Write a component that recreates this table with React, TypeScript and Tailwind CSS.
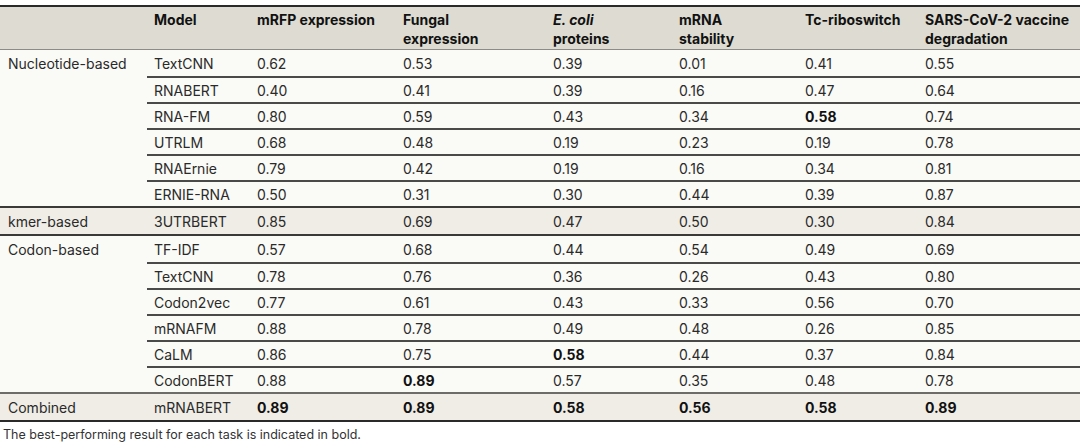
import React from "react";

type Row = { model: string; vals: string[]; bold?: number[] };
type Group = { name: string; rows: Row[]; shaded?: boolean; topGray?: boolean };

const groups: Group[] = [
  {
    name: "Nucleotide-based",
    rows: [
      { model: "TextCNN", vals: ["0.62", "0.53", "0.39", "0.01", "0.41", "0.55"] },
      { model: "RNABERT", vals: ["0.40", "0.41", "0.39", "0.16", "0.47", "0.64"] },
      { model: "RNA-FM", vals: ["0.80", "0.59", "0.43", "0.34", "0.58", "0.74"], bold: [4] },
      { model: "UTRLM", vals: ["0.68", "0.48", "0.19", "0.23", "0.19", "0.78"] },
      { model: "RNAErnie", vals: ["0.79", "0.42", "0.19", "0.16", "0.34", "0.81"] },
      { model: "ERNIE-RNA", vals: ["0.50", "0.31", "0.30", "0.44", "0.39", "0.87"] },
    ],
  },
  {
    name: "kmer-based",
    shaded: true,
    rows: [{ model: "3UTRBERT", vals: ["0.85", "0.69", "0.47", "0.50", "0.30", "0.84"] }],
  },
  {
    name: "Codon-based",
    rows: [
      { model: "TF-IDF", vals: ["0.57", "0.68", "0.44", "0.54", "0.49", "0.69"] },
      { model: "TextCNN", vals: ["0.78", "0.76", "0.36", "0.26", "0.43", "0.80"] },
      { model: "Codon2vec", vals: ["0.77", "0.61", "0.43", "0.33", "0.56", "0.70"] },
      { model: "mRNAFM", vals: ["0.88", "0.78", "0.49", "0.48", "0.26", "0.85"] },
      { model: "CaLM", vals: ["0.86", "0.75", "0.58", "0.44", "0.37", "0.84"], bold: [2] },
      { model: "CodonBERT", vals: ["0.88", "0.89", "0.57", "0.35", "0.48", "0.78"], bold: [1] },
    ],
  },
  {
    name: "Combined",
    shaded: true,
    topGray: true,
    rows: [
      { model: "mRNABERT", vals: ["0.89", "0.89", "0.58", "0.56", "0.58", "0.89"], bold: [0, 1, 2, 3, 4, 5] },
    ],
  },
];

const widths = ["w-[103px]", "w-[146px]", "w-[150px]", "w-[126px]", "w-[126px]", "w-[120px]"];

function DataRow({ row, first }: { row: Row; first: boolean }) {
  return (
    <div className={`flex items-center h-[26px] ${first ? "" : "border-t-2 border-[#4a4a48]"}`}>
      <div className="w-[103px] pl-[7px] shrink-0">{row.model}</div>
      {row.vals.map((v, i) => (
        <div
          key={i}
          className={`${widths[i + 1] ?? ""} ${i === 5 ? "flex-1" : "shrink-0"} pl-[7px] ${
            row.bold?.includes(i) ? "font-bold text-[#111]" : ""
          }`}
        >
          {v}
        </div>
      ))}
    </div>
  );
}

export default function App() {
  return (
    <div
      className="w-[1080px] h-[448px] bg-white text-[14px] text-[#2a2a2a] overflow-hidden"
      style={{ fontFamily: "Inter, 'Liberation Sans', sans-serif" }}
    >
      <div className="mt-[5px] border-t-2 border-[#2a2a2a] bg-[#fafaf6]">
        {/* header */}
        <div className="flex h-[43px] bg-[#dedcd2] border-b border-[#8c8b85] font-bold text-[#111] leading-[19px] pt-[3px]">
          <div className="w-[147px] shrink-0" />
          <div className="w-[103px] pl-[7px] shrink-0">Model</div>
          <div className="w-[146px] pl-[7px] shrink-0">mRFP expression</div>
          <div className="w-[150px] pl-[7px] shrink-0">
            Fungal
            <br />
            expression
          </div>
          <div className="w-[126px] pl-[7px] shrink-0">
            <i>E. coli</i>
            <br />
            proteins
          </div>
          <div className="w-[126px] pl-[7px] shrink-0">
            mRNA
            <br />
            stability
          </div>
          <div className="w-[120px] pl-[7px] shrink-0">Tc-riboswitch</div>
          <div className="flex-1 pl-[7px]">
            SARS-CoV-2 vaccine
            <br />
            degradation
          </div>
        </div>
        {/* body */}
        {groups.map((g, gi) => {
          const border =
            gi === 0
              ? ""
              : g.topGray
              ? "border-t-2 border-[#6d6c68]"
              : "border-t-2 border-[#3a3a38]";
          return (
            <div
              key={gi}
              className={`flex ${border} ${g.shaded ? "bg-[#efede6]" : ""} ${
                gi === groups.length - 1 ? "border-b-2 border-b-[#2a2a2a]" : ""
              }`}
            >
              <div className="w-[147px] shrink-0 pl-2 h-[26px] flex items-center">{g.name}</div>
              <div className="flex-1 flex flex-col">
                {g.rows.map((r, ri) => (
                  <DataRow key={ri} row={r} first={ri === 0} />
                ))}
              </div>
            </div>
          );
        })}
      </div>
      <div className="pl-[3px] pt-[5px] text-[12.5px] text-[#333] leading-[16px]">
        The best-performing result for each task is indicated in bold.
      </div>
    </div>
  );
}
